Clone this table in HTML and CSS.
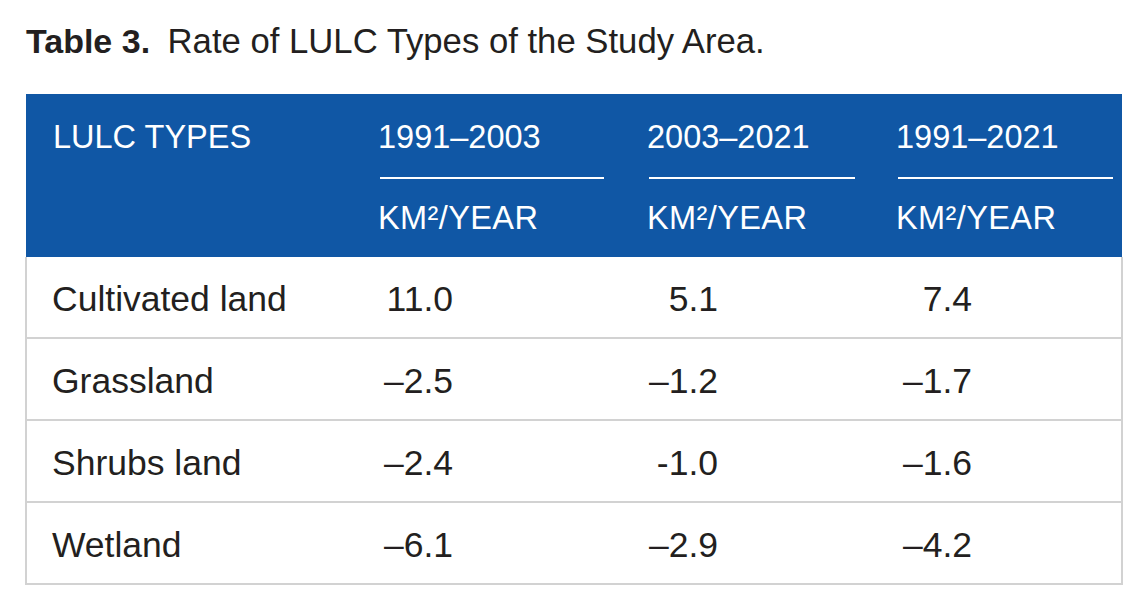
FILE: index.html
```html
<!DOCTYPE html>
<html lang="en">
<head>
<meta charset="utf-8">
<title>Table 3. Rate of LULC Types of the Study Area.</title>
<link rel="stylesheet" href="styles.css">
</head>
<body>
<div class="page">
  <h1 class="caption"><span class="label">Table 3.</span> <span class="text">Rate of LULC Types of the Study Area.</span></h1>
  <table class="lulc">
    <colgroup>
      <col class="c1"><col class="c2"><col class="c3"><col class="c4">
    </colgroup>
    <thead>
      <tr>
        <th class="type-head"><div class="year">LULC TYPES</div></th>
        <th><div class="year">1991–2003</div><div class="rule"></div><div class="unit">KM²/YEAR</div></th>
        <th><div class="year">2003–2021</div><div class="rule"></div><div class="unit">KM²/YEAR</div></th>
        <th><div class="year">1991–2021</div><div class="rule"></div><div class="unit">KM²/YEAR</div></th>
      </tr>
    </thead>
    <tbody>
      <tr>
        <td class="name">Cultivated land</td>
        <td class="num"><span class="v v2">11.0</span></td>
        <td class="num"><span class="v v3">5.1</span></td>
        <td class="num"><span class="v v4">7.4</span></td>
      </tr>
      <tr>
        <td class="name">Grassland</td>
        <td class="num"><span class="v v2">–2.5</span></td>
        <td class="num"><span class="v v3">–1.2</span></td>
        <td class="num"><span class="v v4">–1.7</span></td>
      </tr>
      <tr>
        <td class="name">Shrubs land</td>
        <td class="num"><span class="v v2">–2.4</span></td>
        <td class="num"><span class="v v3">-1.0</span></td>
        <td class="num"><span class="v v4">–1.6</span></td>
      </tr>
      <tr>
        <td class="name">Wetland</td>
        <td class="num"><span class="v v2">–6.1</span></td>
        <td class="num"><span class="v v3">–2.9</span></td>
        <td class="num"><span class="v v4">–4.2</span></td>
      </tr>
    </tbody>
  </table>
</div>
</body>
</html>
```
FILE: styles.css
```css
html, body {
  margin: 0;
  padding: 0;
  background: #ffffff;
}

body {
  font-family: "Liberation Sans", Arial, Helvetica, sans-serif;
  color: #231f20;
}

.page {
  padding: 21px 0 0 25px;
}

.caption {
  margin: 0 0 33px 1px;
  font-size: 34px;
  line-height: 40px;
  font-weight: normal;
  color: #231f20;
  white-space: nowrap;
}

.caption .label {
  font-weight: bold;
  margin-right: 8px;
}

.caption .text {
  font-size: 34.7px;
}

.lulc {
  border-collapse: collapse;
  border-spacing: 0;
  table-layout: fixed;
  width: 1096px;
}

.c1 { width: 324px; }
.c2 { width: 269px; }
.c3 { width: 249px; }
.c4 { width: 254px; }

.lulc thead th {
  background: #1057a5;
  color: #ffffff;
  font-weight: normal;
  text-align: left;
  vertical-align: top;
  font-size: 32.5px;
  line-height: 36px;
  padding: 25px 13px 21px 28px;
}

.lulc thead th.type-head {
  padding-left: 27px;
}

.lulc thead th:nth-child(2) { padding-right: 15px; }
.lulc thead th:nth-child(3) { padding-right: 13px; }
.lulc thead th:nth-child(4) { padding-right: 9px; }

.year,
.unit {
  white-space: nowrap;
}

.unit {
  letter-spacing: 0.4px;
}

.rule {
  height: 2px;
  background: #ffffff;
  margin: 22px 0 21px 2px;
}

.lulc tbody td {
  font-size: 35.5px;
  line-height: 40px;
  padding: 22px 0 18px 28px;
  border-bottom: 2px solid #d2d2d2;
  white-space: nowrap;
  vertical-align: top;
}

.lulc tbody td.name {
  border-left: 2px solid #d2d2d2;
  padding-left: 25px;
}

.lulc tbody td:last-child {
  border-right: 2px solid #d2d2d2;
}

.v {
  display: inline-block;
  text-align: right;
}

.v2 { width: 75px; }
.v3 { width: 71px; }
.v4 { width: 76px; }
```
